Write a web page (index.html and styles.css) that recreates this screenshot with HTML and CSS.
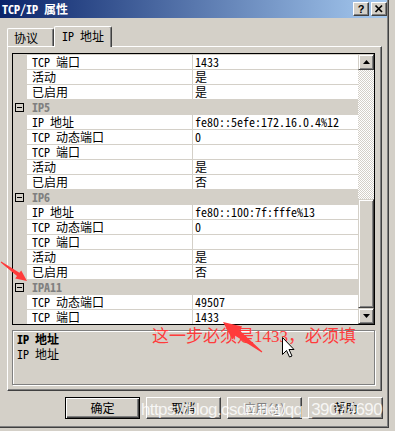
FILE: index.html
```html
<!DOCTYPE html>
<html lang="zh-CN">
<head>
<meta charset="utf-8">
<title>TCP/IP 属性</title>
<link rel="stylesheet" href="styles.css">
</head>
<body>
<div class="window">
  <div class="titlebar">
    <span class="title">TCP/IP 属性</span>
    <div class="tbtns">
      <span class="tbtn q">?</span>
      <span class="tbtn x"><svg width="14" height="12" viewBox="0 0 14 12"><path d="M3.5 2.5 L10 9 M10 2.5 L3.5 9" stroke="#000" stroke-width="1.7" fill="none"/></svg></span>
    </div>
  </div>
  <div class="client">
    <div class="tabs">
      <div class="tab">协议</div>
      <div class="tab active">IP 地址</div>
    </div>
    <div class="panel">
      <div class="list">
        <div class="rows">
          <div class="row"><span class="gut"></span><span class="name">TCP 端口</span><span class="val">1433</span></div>
          <div class="row"><span class="gut"></span><span class="name">活动</span><span class="val">是</span></div>
          <div class="row"><span class="gut"></span><span class="name">已启用</span><span class="val">是</span></div>
          <div class="row grp"><span class="gut"><i class="minus"></i></span><span class="gname">IP5</span></div>
          <div class="row"><span class="gut"></span><span class="name">IP 地址</span><span class="val">fe80::5efe:172.16.0.4%12</span></div>
          <div class="row"><span class="gut"></span><span class="name">TCP 动态端口</span><span class="val">0</span></div>
          <div class="row"><span class="gut"></span><span class="name">TCP 端口</span><span class="val"></span></div>
          <div class="row"><span class="gut"></span><span class="name">活动</span><span class="val">是</span></div>
          <div class="row"><span class="gut"></span><span class="name">已启用</span><span class="val">否</span></div>
          <div class="row grp"><span class="gut"><i class="minus"></i></span><span class="gname">IP6</span></div>
          <div class="row"><span class="gut"></span><span class="name">IP 地址</span><span class="val">fe80::100:7f:fffe%13</span></div>
          <div class="row"><span class="gut"></span><span class="name">TCP 动态端口</span><span class="val">0</span></div>
          <div class="row"><span class="gut"></span><span class="name">TCP 端口</span><span class="val"></span></div>
          <div class="row"><span class="gut"></span><span class="name">活动</span><span class="val">是</span></div>
          <div class="row"><span class="gut"></span><span class="name">已启用</span><span class="val">否</span></div>
          <div class="row grp"><span class="gut"><i class="minus"></i></span><span class="gname">IPA11</span></div>
          <div class="row"><span class="gut"></span><span class="name">TCP 动态端口</span><span class="val">49507</span></div>
          <div class="row"><span class="gut"></span><span class="name">TCP 端口</span><span class="val">1433</span></div>
        </div>
        <div class="vscroll">
          <div class="sbtn"><svg width="7" height="4" viewBox="0 0 7 4"><polygon points="3.5,0 7,4 0,4" fill="#000"/></svg></div>
          <div class="track"></div>
          <div class="thumb"></div>
          <div class="sbtn"><svg width="7" height="4" viewBox="0 0 7 4"><polygon points="0,0 7,0 3.5,4" fill="#000"/></svg></div>
        </div>
      </div>
      <div class="desc">
        <div class="dtitle">IP 地址</div>
        <div>IP 地址</div>
      </div>
    </div>
    <div class="buttons">
      <button class="btn def">确定</button>
      <button class="btn">取消</button>
      <button class="btn dis">应用(<u>A</u>)</button>
      <button class="btn">帮助</button>
    </div>
  </div>
</div>

<div class="note">这一步必须是1433，必须填</div>
<svg class="marks" width="395" height="431" viewBox="0 0 395 431">
  <polygon points="27,281 21.2,270.4 19.4,272.8 1.3,261.6 0.7,262.4 17,276 15.2,278.4" fill="#ff3b3b"/>
  <polygon points="223,322 242.2,326.6 239.4,330.2 262.3,351.6 261.7,352.4 235.2,335.8 232.4,339.4" fill="#ff3b3b"/>
  <path d="M282.5 337.5 V354.5 L286.5 350.5 L289.5 357 L292 356 L289 349.5 H294 Z" fill="#fff" stroke="#000" stroke-width="1"/>
</svg>
<div class="wm">https://blog.csdn.net/qq_39074690</div>
</body>
</html>
```
FILE: styles.css
```css
html, body {
  margin: 0;
  padding: 0;
}
body {
  width: 395px;
  height: 431px;
  overflow: hidden;
  position: relative;
  background: #d4d0c8;
  font-family: "Noto Sans Mono CJK SC", "Noto Sans CJK SC", sans-serif;
  font-size: 12px;
  color: #000;
}
.window {
  width: 389px;
  height: 428px;
  box-sizing: border-box;
  border-right: 1px solid #404040;
  border-bottom: 1px solid #404040;
  box-shadow: inset -1px -1px #808080;
  background: #d4d0c8;
}
.titlebar {
  height: 18px;
  margin-right: 1px;
  box-sizing: border-box;
  padding-left: 2px;
  background: linear-gradient(to right, #0a246a, #a6caf0);
  display: flex;
  align-items: center;
  justify-content: space-between;
  color: #fff;
  font-weight: bold;
}
.title {
  line-height: 18px;
}
.tbtns {
  display: flex;
  gap: 2px;
}
.tbtn {
  width: 16px;
  height: 14px;
  box-sizing: border-box;
  background: #d4d0c8;
  border: 1px solid;
  border-color: #fff #404040 #404040 #fff;
  box-shadow: inset -1px -1px #808080;
  display: flex;
  align-items: center;
  justify-content: center;
  color: #000;
}
.tbtn.q {
  font-family: "Liberation Sans", sans-serif;
  font-size: 11px;
  font-weight: bold;
  line-height: 12px;
}
.client {
  padding: 8px 0 0 7px;
}
.tabs {
  display: flex;
  align-items: flex-end;
  height: 20px;
  position: relative;
  z-index: 1;
}
.tab {
  height: 18px;
  width: 47px;
  box-sizing: border-box;
  background: #d4d0c8;
  border-left: 1px solid #fff;
  border-top: 1px solid #fff;
  border-right: 1px solid #404040;
  box-shadow: inset -1px 0 #808080;
  border-top-left-radius: 2px;
  border-top-right-radius: 2px;
  padding-left: 6px;
  line-height: 17px;
}
.tab.active {
  height: 21px;
  width: 58px;
  margin-bottom: -1px;
  padding-left: 7px;
}
.panel {
  width: 375px;
  height: 345px;
  box-sizing: border-box;
  border: 1px solid;
  border-color: #fff #404040 #404040 #fff;
  box-shadow: inset -1px -1px #808080;
  padding: 6px 6px 0 4px;
}
.list {
  display: flex;
  width: 363px;
  height: 272px;
  box-sizing: border-box;
  border: 1px solid #000;
  background: #fff;
}
.rows {
  width: 345px;
}
.row {
  display: flex;
  height: 15px;
  box-sizing: border-box;
  border-top: 1px solid #d4d0c8;
  line-height: 14px;
  white-space: nowrap;
}
.gut {
  width: 14px;
  flex: none;
  background: #d4d0c8;
}
.name {
  width: 166px;
  flex: none;
  box-sizing: border-box;
  border-right: 1px solid #d4d0c8;
  padding-left: 5px;
}
.val {
  flex: 1;
  padding-left: 2px;
}
.grp {
  background: #d4d0c8;
}
.gname {
  padding-left: 5px;
  font-weight: bold;
  color: #808080;
}
.minus {
  display: block;
  width: 9px;
  height: 9px;
  box-sizing: border-box;
  border: 1px solid #000;
  margin: 3px 0 0 2px;
  position: relative;
}
.minus::after {
  content: "";
  position: absolute;
  left: 1px;
  top: 3px;
  width: 5px;
  height: 1px;
  background: #000;
}
.vscroll {
  width: 16px;
  display: flex;
  flex-direction: column;
}
.sbtn, .thumb {
  box-sizing: border-box;
  background: #d4d0c8;
  border: 1px solid;
  border-color: #d4d0c8 #404040 #404040 #d4d0c8;
  box-shadow: inset 1px 1px #fff, inset -1px -1px #808080;
}
.sbtn {
  height: 16px;
  display: flex;
  align-items: center;
  justify-content: center;
}
.sbtn svg {
  display: block;
}
.track {
  height: 129px;
  background: repeating-conic-gradient(#fff 0 25%, #d4d0c8 0 50%) 0 0 / 2px 2px;
}
.thumb {
  height: 109px;
}
.desc {
  margin-top: 5px;
  height: 55px;
  box-sizing: border-box;
  border: 1px solid #808080;
  box-shadow: inset 1px 1px #fff, 1px 1px #fff;
  padding-left: 4px;
  line-height: 15px;
}
.dtitle {
  font-weight: bold;
}
.buttons {
  display: flex;
  justify-content: flex-end;
  gap: 6px;
  margin-top: 6px;
  padding-right: 5px;
}
.btn {
  width: 75px;
  height: 22px;
  box-sizing: border-box;
  margin: 0;
  padding: 0;
  font: inherit;
  font-size: 12px;
  line-height: 18px;
  color: #000;
  background: #d4d0c8;
  border: 1px solid;
  border-color: #fff #404040 #404040 #fff;
  box-shadow: inset -1px -1px #808080;
  border-radius: 0;
}
.btn.def {
  border: 1px solid #000;
  box-shadow: inset 1px 1px #fff, inset -1px -1px #404040, inset -2px -2px #808080;
}
.btn.dis {
  color: #808080;
  text-shadow: 1px 1px #fff;
}
.note {
  position: absolute;
  left: 152px;
  top: 328px;
  font-family: "Liberation Serif", "Noto Sans CJK SC", serif;
  font-size: 17px;
  line-height: 17px;
  color: #ff3b3b;
  white-space: nowrap;
}
.marks {
  position: absolute;
  left: 0;
  top: 0;
}
.wm {
  position: absolute;
  left: 141px;
  top: 401px;
  font-family: "Liberation Sans", sans-serif;
  font-size: 17px;
  line-height: 1;
  letter-spacing: -0.6px;
  color: rgba(255, 255, 255, 0.82);
  white-space: nowrap;
}
```
